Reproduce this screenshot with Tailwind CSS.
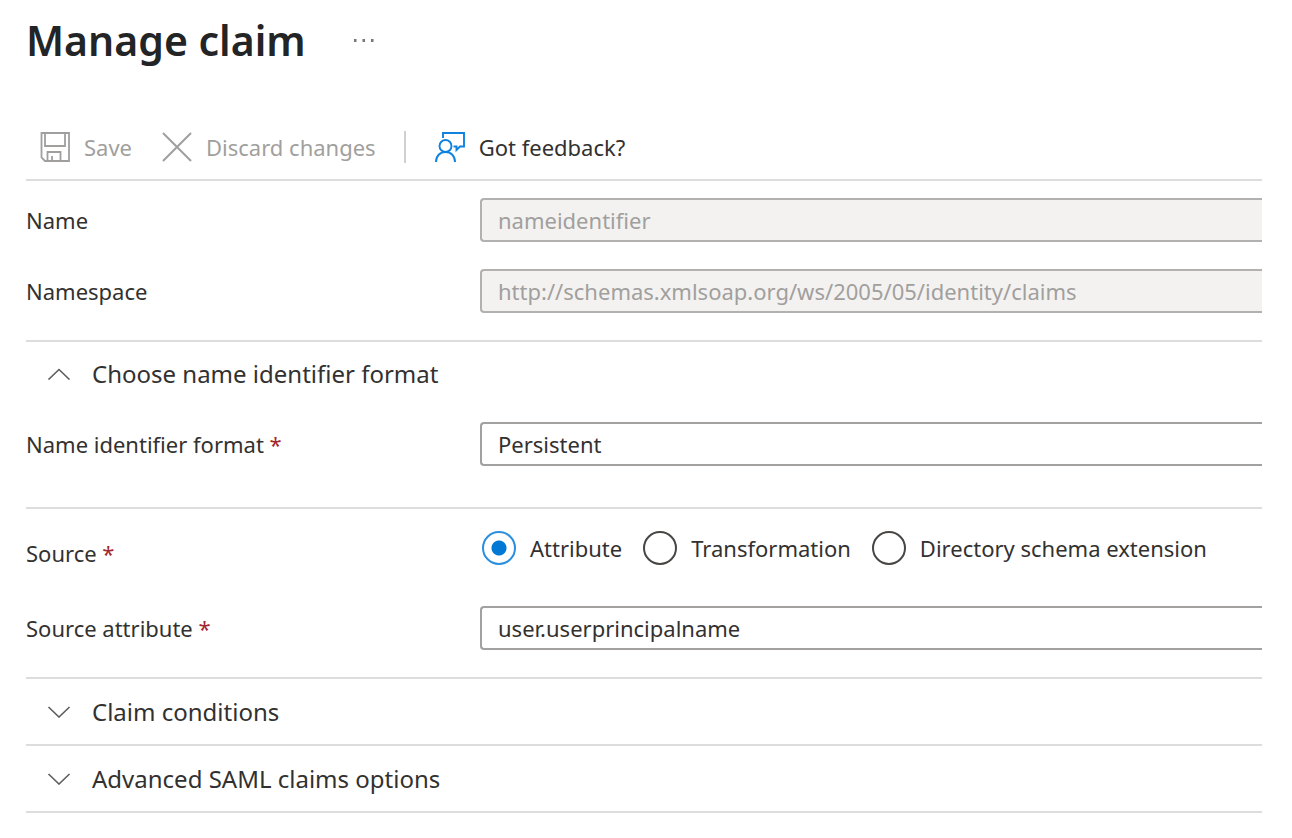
<!DOCTYPE html>
<html lang="en">
  <head>
    <meta charset="UTF-8" />
    <meta name="viewport" content="width=device-width, initial-scale=1.0" />
    <title>Manage claim</title>
    <script src="https://cdn.jsdelivr.net/npm/@tailwindcss/browser@4"></script>
  </head>
  <body class="bg-white pl-[26px] pr-[30px] font-['Noto_Sans','Open_Sans',sans-serif] text-[22px] leading-8 text-[#323130]">
    <header class="flex h-[118px] items-start gap-12 pt-4">
      <h1 class="text-[41px] leading-12 font-semibold text-[#222426]">Manage claim</h1>
      <button class="flex h-12 items-center" aria-label="More options">
        <svg class="h-1 w-5" viewBox="0 0 20 4" fill="#797775">
          <rect x="0" y="1" width="2.500" height="3" />
          <rect x="8.500" y="1" width="2.500" height="3" />
          <rect x="17" y="1" width="2.500" height="3" />
        </svg>
      </button>
    </header>

    <form>
      <!-- command bar -->
      <div class="flex h-[63px] items-center border-b-2 border-[#dddddd] pb-1 pl-[14px]">
        <button type="button" disabled class="flex items-center gap-[14px] text-[#a19f9d]">
          <svg class="size-[30px]" viewBox="0 0 30 30" fill="none" stroke="currentColor" stroke-width="1.8">
            <path d="M1.500 1H29V29H5L1.500 25.500Z" />
            <path d="M5 1V14H25V1" />
            <path d="M7.500 29V20H20.500V29" />
            <path d="M12 29V24" />
          </svg>
          Save
        </button>
        <button type="button" disabled class="ml-[30px] flex items-center gap-[14px] text-[#a19f9d]">
          <svg class="size-[30px]" viewBox="0 0 30 30" fill="none" stroke="currentColor" stroke-width="2">
            <path d="M1 1L29 29M29 1L1 29" />
          </svg>
          Discard changes
        </button>
        <span class="ml-7 h-8 w-0.5 bg-[#d2d0ce]"></span>
        <button type="button" class="ml-[29px] flex items-center gap-[14px]">
          <svg class="size-[30px]" viewBox="0 0 30 30" fill="none" stroke="#0f82e0" stroke-width="1.9">
            <path d="M8 6V1H29V14.500H25L21.500 18V14.500H18.500" />
            <circle cx="10.500" cy="14" r="6" />
            <path d="M1 30C1 24 5 20 10.500 20S20 24 20 30" />
          </svg>
          Got feedback?
        </button>
      </div>

      <!-- name / namespace -->
      <div class="grid grid-cols-[454px_1fr] items-center gap-y-[27px] border-b-2 border-[#dddddd] pt-[17px] pb-[27px]">
        <label for="name">Name</label>
        <input id="name" disabled value="nameidentifier" class="h-11 w-full rounded-l-sm border-2 border-r-0 border-[#b3b1af] bg-[#f3f2f1] px-4 text-[#a19f9d]" />
        <label for="namespace">Namespace</label>
        <input id="namespace" disabled value="http://schemas.xmlsoap.org/ws/2005/05/identity/claims" class="h-11 w-full rounded-l-sm border-2 border-r-0 border-[#b3b1af] bg-[#f3f2f1] px-4 text-[#a19f9d]" />
      </div>

      <!-- name identifier format -->
      <section class="border-b-2 border-[#dddddd] pb-[41px]">
        <button type="button" aria-expanded="true" class="flex h-16 w-full items-center gap-[21px] pl-[21px] text-[24px]">
          <svg class="h-3 w-6" viewBox="0 0 24 12" fill="none" stroke="#605e5c" stroke-width="1.6">
            <path d="M1.500 11.500L12 1.500L22.500 11.500" />
          </svg>
          Choose name identifier format
        </button>
        <div class="grid grid-cols-[454px_1fr] items-center pt-4">
          <label for="format">Name identifier format <span class="text-[#a4262c]">*</span></label>
          <select id="format" required class="h-11 w-full appearance-none rounded-l-sm border-2 border-r-0 border-[#a3a19f] bg-white px-4">
            <option>Persistent</option>
          </select>
        </div>
      </section>

      <!-- source -->
      <section class="border-b-2 border-[#dddddd] pt-[15px] pb-[27px]">
        <fieldset class="grid grid-cols-[454px_1fr] items-center">
          <legend class="contents"><span class="pt-2.5">Source <span class="text-[#a4262c]">*</span></span></legend>
          <div class="flex h-12 items-center gap-[21px] whitespace-nowrap pl-0.5">
            <label class="flex items-center gap-[14px]">
              <input type="radio" name="source" checked class="size-[34px] appearance-none rounded-full border-2 border-[#484644] checked:border-[#2b8fdf] checked:bg-[radial-gradient(circle,#0078d4_7px,transparent_8px)]" />
              Attribute
            </label>
            <label class="flex items-center gap-[14px]">
              <input type="radio" name="source" class="size-[34px] appearance-none rounded-full border-2 border-[#484644] checked:border-[#2b8fdf] checked:bg-[radial-gradient(circle,#0078d4_7px,transparent_8px)]" />
              Transformation
            </label>
            <label class="flex items-center gap-[14px]">
              <input type="radio" name="source" class="size-[34px] appearance-none rounded-full border-2 border-[#484644] checked:border-[#2b8fdf] checked:bg-[radial-gradient(circle,#0078d4_7px,transparent_8px)]" />
              Directory schema extension
            </label>
          </div>
        </fieldset>
        <div class="grid grid-cols-[454px_1fr] items-center pt-[34px]">
          <label for="attribute">Source attribute <span class="text-[#a4262c]">*</span></label>
          <select id="attribute" required class="h-11 w-full appearance-none rounded-l-sm border-2 border-r-0 border-[#a3a19f] bg-white px-4">
            <option>user.userprincipalname</option>
          </select>
        </div>
      </section>

      <button type="button" aria-expanded="false" class="flex h-[67px] w-full items-center gap-[21px] border-b-2 border-[#dddddd] pl-[21px] text-[24px]">
        <svg class="h-3 w-6" viewBox="0 0 24 12" fill="none" stroke="#605e5c" stroke-width="1.6">
          <path d="M1.500 1L12 11L22.500 1" />
        </svg>
        Claim conditions
      </button>
      <button type="button" aria-expanded="false" class="flex h-[67px] w-full items-center gap-[21px] border-b-2 border-[#dddddd] pl-[21px] text-[24px]">
        <svg class="h-3 w-6" viewBox="0 0 24 12" fill="none" stroke="#605e5c" stroke-width="1.6">
          <path d="M1.500 1L12 11L22.500 1" />
        </svg>
        Advanced SAML claims options
      </button>
    </form>
  </body>
</html>
